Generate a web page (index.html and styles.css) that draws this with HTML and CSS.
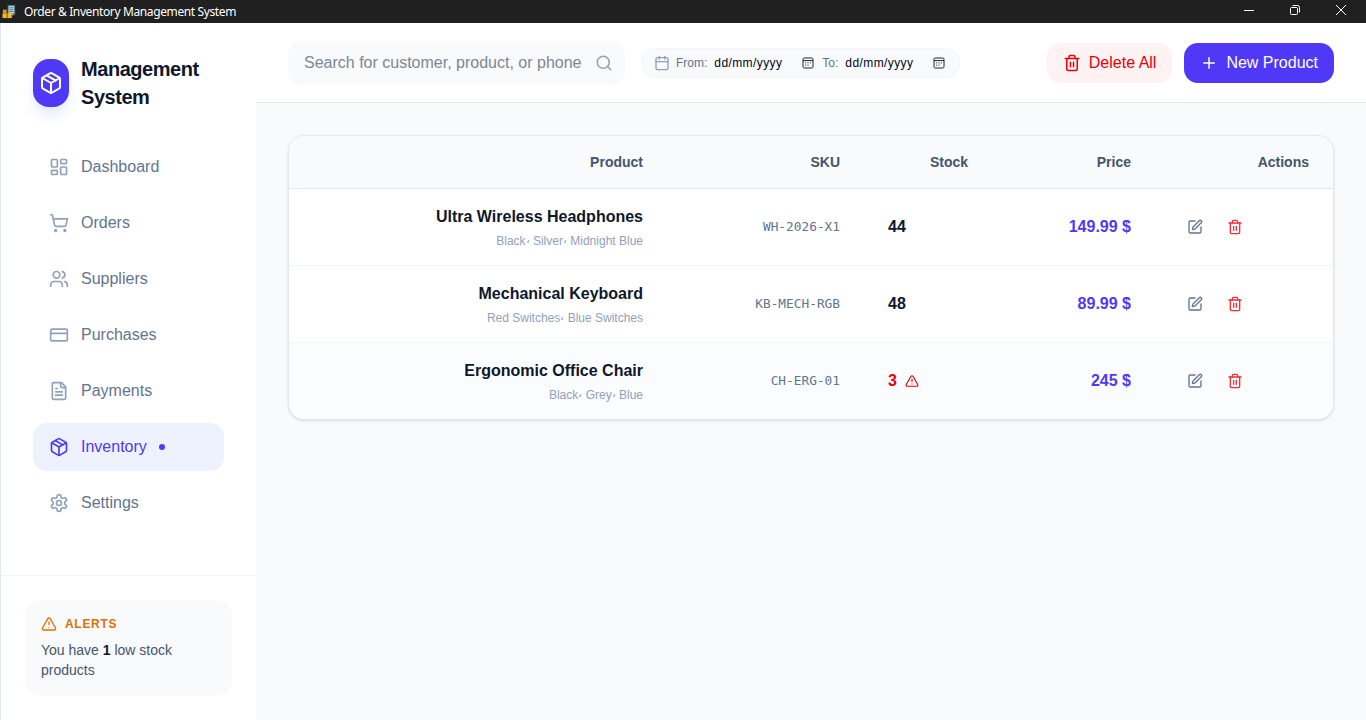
FILE: index.html
```html
<!DOCTYPE html>
<html lang="en">
<head>
  <meta charset="UTF-8">
  <title>Order &amp; Inventory Management System</title>
  <link rel="stylesheet" href="styles.css">
</head>
<body>
  <!-- shared icon shapes -->
  <svg class="sprite" xmlns="http://www.w3.org/2000/svg">
    <symbol id="box" viewBox="0 0 24 24">
      <path d="M11 21.73a2 2 0 0 0 2 0l7-4A2 2 0 0 0 21 16V8a2 2 0 0 0-1-1.73l-7-4a2 2 0 0 0-2 0l-7 4A2 2 0 0 0 3 8v8a2 2 0 0 0 1 1.73z"/>
      <path d="M12 22V12"/><path d="M3.29 7 12 12l8.71-5"/><path d="m7.5 4.27 9 5.15"/>
    </symbol>
    <symbol id="trash" viewBox="0 0 24 24">
      <path d="M3 6h18"/><path d="M19 6v14a2 2 0 0 1-2 2H7a2 2 0 0 1-2-2V6"/>
      <path d="M8 6V4a2 2 0 0 1 2-2h4a2 2 0 0 1 2 2v2"/><path d="M10 11v6M14 11v6"/>
    </symbol>
    <symbol id="edit" viewBox="0 0 24 24">
      <path d="M12 3H5a2 2 0 0 0-2 2v14a2 2 0 0 0 2 2h14a2 2 0 0 0 2-2v-7"/>
      <path d="M18.375 2.625a1 1 0 0 1 3 3l-9.013 9.014a2 2 0 0 1-.853.505l-2.873.84a.5.5 0 0 1-.62-.62l.84-2.873a2 2 0 0 1 .506-.852z"/>
    </symbol>
    <symbol id="alert" viewBox="0 0 24 24">
      <path d="m21.73 18-8-14a2 2 0 0 0-3.48 0l-8 14A2 2 0 0 0 4 21h16a2 2 0 0 0 1.73-3"/>
      <path d="M12 9v4M12 17h.01"/>
    </symbol>
    <symbol id="picker" viewBox="0 0 12 12">
      <rect x="1" y="1" width="10" height="10" rx="1.3"/><path d="M1 3.6h10"/>
      <path d="M3.2 5.9h1M5.5 5.9h1M7.8 5.9h1M3.2 8.1h1M5.5 8.1h1"/>
    </symbol>
  </svg>

  <div class="titlebar">
    <svg class="app-icon" viewBox="0 0 16 16">
      <rect x="6" y="1" width="8" height="11" fill="#2f7186"/>
      <rect x="7" y="2" width="6" height="9" fill="#b9c9cf"/>
      <path d="M8 4h4M8 6h4M8 8h4" stroke="#4b6f80" stroke-width=".8"/>
      <rect x="1" y="6" width="4" height="4" fill="#d99520"/>
      <rect x="0.5" y="10" width="10" height="5" fill="#f2b52b"/>
      <path d="M5.5 10v5" stroke="#8a5a12"/>
      <path d="M10 13l4-5" stroke="#b57a35" stroke-width="1.2"/>
    </svg>
    <span class="app-name">Order &amp; Inventory Management System</span>
    <div class="window-buttons">
      <svg viewBox="0 0 12 12"><path d="M1 6.5h10"/></svg>
      <svg viewBox="0 0 12 12"><rect x="1.5" y="3.5" width="7" height="7" rx="1"/><path d="M3.5 1.5h5a2 2 0 0 1 2 2v5"/></svg>
      <svg viewBox="0 0 12 12"><path d="M1 1l10 10M11 1L1 11"/></svg>
    </div>
  </div>

  <div class="app">
    <aside class="sidebar">
      <div class="brand">
        <div class="logo"><svg class="icon"><use href="#box"/></svg></div>
        <h1>Management System</h1>
      </div>
      <nav>
        <a class="nav-item">
          <svg class="icon" viewBox="0 0 24 24"><rect width="7" height="9" x="3" y="3" rx="1"/><rect width="7" height="5" x="14" y="3" rx="1"/><rect width="7" height="9" x="14" y="12" rx="1"/><rect width="7" height="5" x="3" y="16" rx="1"/></svg>
          <span>Dashboard</span>
        </a>
        <a class="nav-item">
          <svg class="icon" viewBox="0 0 24 24"><circle cx="8" cy="21" r="1"/><circle cx="19" cy="21" r="1"/><path d="M2.05 2.05h2l2.66 12.42a2 2 0 0 0 2 1.58h9.78a2 2 0 0 0 1.95-1.57l1.65-7.43H5.12"/></svg>
          <span>Orders</span>
        </a>
        <a class="nav-item">
          <svg class="icon" viewBox="0 0 24 24"><path d="M16 21v-2a4 4 0 0 0-4-4H6a4 4 0 0 0-4 4v2"/><circle cx="9" cy="7" r="4"/><path d="M22 21v-2a4 4 0 0 0-3-3.87M16 3.13a4 4 0 0 1 0 7.75"/></svg>
          <span>Suppliers</span>
        </a>
        <a class="nav-item">
          <svg class="icon" viewBox="0 0 24 24"><rect width="20" height="14" x="2" y="5" rx="2"/><path d="M2 10h20"/></svg>
          <span>Purchases</span>
        </a>
        <a class="nav-item">
          <svg class="icon" viewBox="0 0 24 24"><path d="M15 2H6a2 2 0 0 0-2 2v16a2 2 0 0 0 2 2h12a2 2 0 0 0 2-2V7Z"/><path d="M14 2v4a2 2 0 0 0 2 2h4M10 9H8M16 13H8M16 17H8"/></svg>
          <span>Payments</span>
        </a>
        <a class="nav-item active">
          <svg class="icon"><use href="#box"/></svg>
          <span>Inventory</span>
          <i class="dot"></i>
        </a>
        <a class="nav-item">
          <svg class="icon" viewBox="0 0 24 24"><path d="M12.22 2h-.44a2 2 0 0 0-2 2v.18a2 2 0 0 1-1 1.73l-.43.25a2 2 0 0 1-2 0l-.15-.08a2 2 0 0 0-2.73.73l-.22.38a2 2 0 0 0 .73 2.73l.15.1a2 2 0 0 1 1 1.72v.51a2 2 0 0 1-1 1.74l-.15.09a2 2 0 0 0-.73 2.73l.22.38a2 2 0 0 0 2.73.73l.15-.08a2 2 0 0 1 2 0l.43.25a2 2 0 0 1 1 1.73V20a2 2 0 0 0 2 2h.44a2 2 0 0 0 2-2v-.18a2 2 0 0 1 1-1.73l.43-.25a2 2 0 0 1 2 0l.15.08a2 2 0 0 0 2.73-.73l.22-.39a2 2 0 0 0-.73-2.73l-.15-.08a2 2 0 0 1-1-1.74v-.5a2 2 0 0 1 1-1.74l.15-.09a2 2 0 0 0 .73-2.73l-.22-.38a2 2 0 0 0-2.73-.73l-.15.08a2 2 0 0 1-2 0l-.43-.25a2 2 0 0 1-1-1.73V4a2 2 0 0 0-2-2z"/><circle cx="12" cy="12" r="3"/></svg>
          <span>Settings</span>
        </a>
      </nav>
      <div class="sidebar-footer">
        <div class="alerts">
          <div class="alerts-title"><svg class="icon small"><use href="#alert"/></svg>ALERTS</div>
          <p>You have <b>1</b> low stock products</p>
        </div>
      </div>
    </aside>

    <main>
      <header>
        <div class="search">
          <span>Search for customer, product, or phone</span>
          <svg class="icon" viewBox="0 0 24 24"><circle cx="11" cy="11" r="8"/><path d="m21 21-4.3-4.3"/></svg>
        </div>
        <div class="dates">
          <svg class="icon small" viewBox="0 0 24 24"><path d="M8 2v4M16 2v4M3 10h18"/><rect width="18" height="18" x="3" y="4" rx="2"/></svg>
          <label>From:</label>
          <div class="date"><span>dd/mm/yyyy</span><svg class="picker"><use href="#picker"/></svg></div>
          <label>To:</label>
          <div class="date"><span>dd/mm/yyyy</span><svg class="picker"><use href="#picker"/></svg></div>
        </div>
        <div class="buttons">
          <button class="delete-all"><svg class="icon"><use href="#trash"/></svg>Delete All</button>
          <button class="new-product"><svg class="icon" viewBox="0 0 24 24"><path d="M5 12h14M12 5v14"/></svg>New Product</button>
        </div>
      </header>

      <section class="content">
        <div class="card">
          <table>
            <colgroup>
              <col class="col-product"><col class="col-sku"><col class="col-stock"><col class="col-price"><col>
            </colgroup>
            <thead>
              <tr><th>Product</th><th>SKU</th><th>Stock</th><th>Price</th><th>Actions</th></tr>
            </thead>
            <tbody>
              <tr>
                <td><div class="name">Ultra Wireless Headphones</div><div class="variants">Black<i>،</i> Silver<i>،</i> Midnight Blue</div></td>
                <td class="sku">WH-2026-X1</td>
                <td><div class="stock">44</div></td>
                <td class="price">149.99 $</td>
                <td><div class="actions"><svg class="icon small edit"><use href="#edit"/></svg><svg class="icon small trash"><use href="#trash"/></svg></div></td>
              </tr>
              <tr>
                <td><div class="name">Mechanical Keyboard</div><div class="variants">Red Switches<i>،</i> Blue Switches</div></td>
                <td class="sku">KB-MECH-RGB</td>
                <td><div class="stock">48</div></td>
                <td class="price">89.99 $</td>
                <td><div class="actions"><svg class="icon small edit"><use href="#edit"/></svg><svg class="icon small trash"><use href="#trash"/></svg></div></td>
              </tr>
              <tr class="hovered">
                <td><div class="name">Ergonomic Office Chair</div><div class="variants">Black<i>،</i> Grey<i>،</i> Blue</div></td>
                <td class="sku">CH-ERG-01</td>
                <td><div class="stock low">3<svg class="icon tiny"><use href="#alert"/></svg></div></td>
                <td class="price">245 $</td>
                <td><div class="actions"><svg class="icon small edit"><use href="#edit"/></svg><svg class="icon small trash"><use href="#trash"/></svg></div></td>
              </tr>
            </tbody>
          </table>
        </div>
      </section>
    </main>
  </div>
</body>
</html>
```
FILE: styles.css
```css
* {
  box-sizing: border-box;
}

body {
  display: flex;
  flex-direction: column;
  height: 100vh;
  margin: 0;
  overflow: hidden;
  font-family: "Liberation Sans", Arial, sans-serif;
  font-size: 16px;
  line-height: 24px;
  color: #0f172b;
  background: #f8fafc;
}

h1, p {
  margin: 0;
}

.sprite {
  display: none;
}

.icon {
  width: 20px;
  height: 20px;
  flex-shrink: 0;
  fill: none;
  stroke: currentColor;
  stroke-width: 2;
  stroke-linecap: round;
  stroke-linejoin: round;
}

.small {
  width: 16px;
  height: 16px;
}

.tiny {
  width: 14px;
  height: 14px;
}

/* window title bar */
.titlebar {
  display: flex;
  align-items: center;
  height: 23px;
  flex-shrink: 0;
  padding: 0 19px 0 2px;
  background: #202020;
  color: #fff;
}

.app-icon {
  width: 15px;
  height: 15px;
  margin-right: 7px;
}

.app-name {
  flex: 1;
  font: 12px/22px "Noto Sans", sans-serif;
  letter-spacing: -0.38px;
}

.window-buttons {
  display: flex;
  gap: 34px;
  padding-bottom: 3px;
}

.window-buttons svg {
  width: 12px;
  height: 12px;
  fill: none;
  stroke: #fff;
  stroke-width: 1;
}

.app {
  display: flex;
  flex: 1;
  min-height: 0;
}

/* sidebar */
.sidebar {
  display: flex;
  flex-direction: column;
  width: 256px;
  flex-shrink: 0;
  border-left: 1px solid #e2e8f0;
  background: #fff;
}

.brand {
  display: flex;
  align-items: center;
  gap: 12px;
  padding: 32px;
}

.brand h1 {
  font-size: 20px;
  line-height: 28px;
  letter-spacing: -0.45px;
}

.logo {
  display: flex;
  align-items: center;
  justify-content: center;
  width: 36px;
  height: 48px;
  flex-shrink: 0;
  border-radius: 16px;
  background: #4f39f6;
  color: #fff;
  box-shadow: 0 10px 15px -3px #e0e7ff, 0 4px 6px -4px #e0e7ff;
}

.logo .icon {
  width: 24px;
  height: 24px;
}

nav {
  display: flex;
  flex-direction: column;
  flex: 1;
  gap: 8px;
  padding: 0 32px;
}

.nav-item {
  display: flex;
  align-items: center;
  gap: 12px;
  height: 48px;
  padding: 0 16px;
  border-radius: 14px;
  color: #62748e;
}

.nav-item .icon {
  color: #90a1b9;
}

.nav-item.active {
  background: #eef2ff;
}

.nav-item.active,
.nav-item.active .icon {
  color: #4f39f6;
}

.dot {
  width: 6px;
  height: 6px;
  border-radius: 50%;
  background: #4f39f6;
}

.sidebar-footer {
  padding: 24px;
  border-top: 1px solid #f1f5f9;
}

.alerts {
  padding: 16px;
  border-radius: 16px;
  background: #f8fafc;
}

.alerts-title {
  display: flex;
  align-items: center;
  gap: 8px;
  margin-bottom: 8px;
  font-size: 12px;
  line-height: 16px;
  font-weight: bold;
  letter-spacing: 0.7px;
  color: #e17100;
}

.alerts p {
  font-size: 14px;
  line-height: 20px;
  color: #45556c;
}

.alerts b {
  color: #0f172b;
}

/* top bar */
main {
  flex: 1;
  min-width: 0;
}

header {
  display: flex;
  align-items: center;
  height: 80px;
  padding: 0 32px;
  border-bottom: 1px solid #e2e8f0;
  background: #fff;
}

.search {
  display: flex;
  align-items: center;
  justify-content: space-between;
  width: 337px;
  height: 44px;
  padding: 0 12px 0 16px;
  border-radius: 14px;
  background: #f8fafc;
  color: #7f8693;
}

.search .icon {
  width: 18px;
  height: 18px;
  color: #90a1b9;
}

.dates {
  display: flex;
  align-items: center;
  width: 319px;
  height: 30px;
  margin-left: 16px;
  padding: 0 12px;
  border: 1px solid #f1f5f9;
  border-radius: 14px;
  background: #f8fafc;
  font-size: 12px;
}

.dates .icon {
  margin-right: 6px;
  color: #90a1b9;
}

.dates label {
  margin-right: 7px;
  color: #62748e;
}

.date {
  display: flex;
  align-items: center;
  width: 100px;
  flex-shrink: 0;
  margin-right: 8px;
  color: #020617;
  letter-spacing: 0.4px;
}

.picker {
  width: 12px;
  height: 12px;
  margin-left: auto;
  fill: none;
  stroke: #222;
  stroke-width: 1;
}

.buttons {
  display: flex;
  gap: 12px;
  margin-left: auto;
}

button {
  display: flex;
  align-items: center;
  gap: 8px;
  height: 40px;
  padding: 0 16px;
  border: 0;
  border-radius: 14px;
  font: inherit;
}

button .icon {
  width: 18px;
  height: 18px;
}

.delete-all {
  background: #fef2f2;
  color: #e7000b;
}

.new-product {
  background: #4f39f6;
  color: #fff;
}

/* product table */
.content {
  padding: 32px;
}

.card {
  overflow: hidden;
  border: 1px solid #e2e8f0;
  border-radius: 16px;
  background: #fff;
  box-shadow: 0 1px 3px rgba(0, 0, 0, 0.1), 0 1px 2px -1px rgba(0, 0, 0, 0.1);
}

table {
  width: 100%;
  table-layout: fixed;
  border-collapse: separate;
  border-spacing: 0;
}

.col-product {
  width: 378px;
}

.col-sku {
  width: 197px;
}

.col-stock {
  width: 128px;
}

.col-price {
  width: 163px;
}

th, td {
  padding: 0 24px;
  text-align: right;
}

th {
  height: 53px;
  border-bottom: 1px solid #e2e8f0;
  background: #f8fafc;
  color: #45556c;
  font-size: 14px;
  line-height: 20px;
}

td {
  height: 77px;
  border-bottom: 1px solid #f1f5f9;
}

tbody tr:last-child td {
  height: 76px;
  border-bottom: 0;
}

.hovered td {
  background: #fbfcfe;
}

.name {
  font-weight: bold;
}

.variants {
  margin-top: 4px;
  font-size: 12px;
  line-height: 16px;
  color: #90a1b9;
}

.variants i {
  font-style: normal;
  line-height: 1;
  vertical-align: 2px;
}

.sku {
  font-family: "DejaVu Sans Mono", monospace;
  font-size: 12.8px;
  color: #62748e;
}

.stock {
  display: flex;
  align-items: center;
  gap: 8px;
  font-weight: bold;
}

.low {
  color: #e7000b;
}

.price {
  font-weight: bold;
  color: #4f39f6;
}

.actions {
  display: flex;
  gap: 24px;
  padding-left: 8px;
}

.edit {
  color: #62748e;
}

.trash {
  color: #fb2c36;
}
```
